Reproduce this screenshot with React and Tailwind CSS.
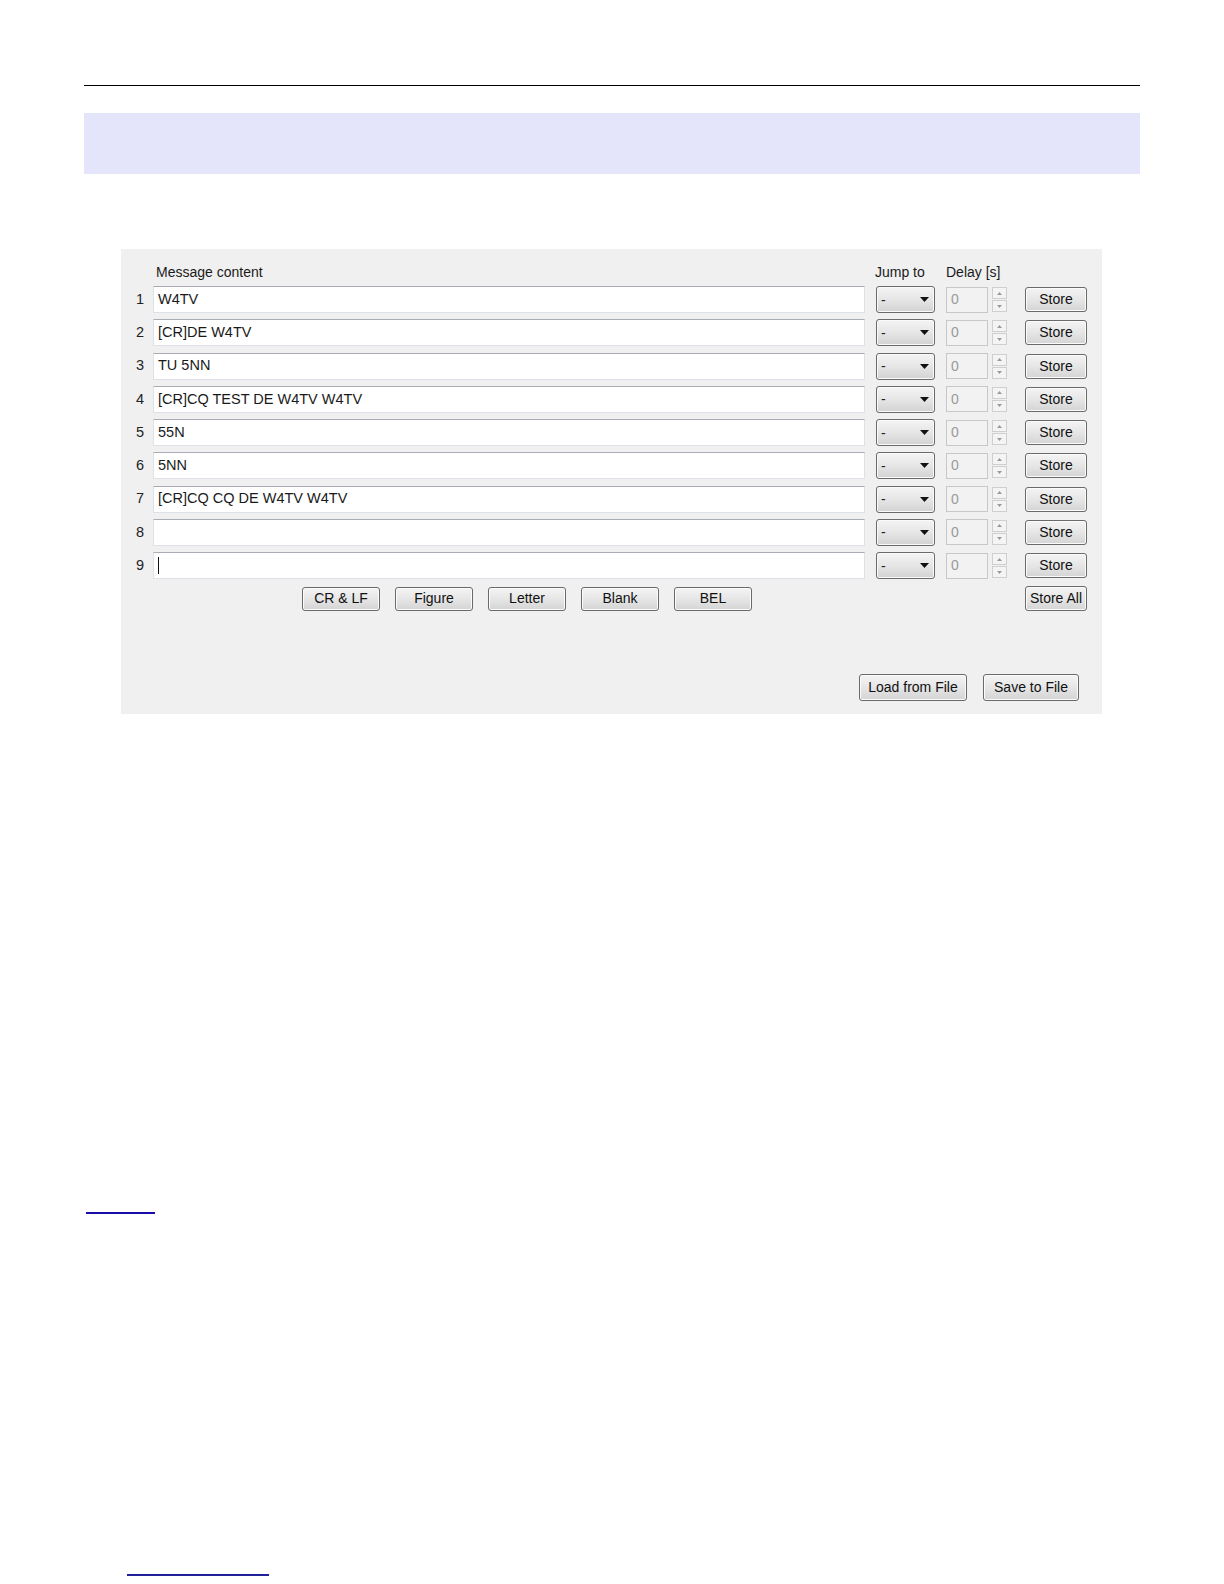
import React from "react";

const rows = [
  "W4TV",
  "[CR]DE W4TV",
  "TU 5NN",
  "[CR]CQ TEST DE W4TV W4TV",
  "55N",
  "5NN",
  "[CR]CQ CQ DE W4TV W4TV",
  "",
  "",
];

function WinButton({ children, className = "" }) {
  return (
    <div
      className={
        "flex items-center justify-center rounded-[3px] border border-[#6a6a6a] bg-gradient-to-b from-[#f4f4f4] via-[#e6e6e6] to-[#d4d4d4] text-[14px] text-[#111] shadow-[inset_0_0_0_1px_#fbfbfb] " +
        className
      }
    >
      {children}
    </div>
  );
}

function Dropdown() {
  return (
    <div className="flex h-[27px] w-[59px] items-center justify-between rounded-[3px] border border-[#6a6a6a] bg-gradient-to-b from-[#f4f4f4] via-[#e6e6e6] to-[#d2d2d2] pl-[4px] pr-[5px] shadow-[inset_0_0_0_1px_#fafafa]">
      <span className="text-[14px] leading-none text-[#222]">-</span>
      <svg width="9" height="5" viewBox="0 0 9 5">
        <path d="M0 0 L9 0 L4.5 5 Z" fill="#111" />
      </svg>
    </div>
  );
}

function Spinner() {
  return (
    <div className="flex w-[15px] flex-col gap-[1px]">
      <div className="flex h-[12px] items-center justify-center border border-[#cfcfcf] bg-[#f4f4f4]">
        <svg width="5" height="3" viewBox="0 0 5 3">
          <path d="M0 3 L5 3 L2.5 0 Z" fill="#9a9a9a" />
        </svg>
      </div>
      <div className="flex h-[12px] items-center justify-center border border-[#cfcfcf] bg-[#f4f4f4]">
        <svg width="5" height="3" viewBox="0 0 5 3">
          <path d="M0 0 L5 0 L2.5 3 Z" fill="#9a9a9a" />
        </svg>
      </div>
    </div>
  );
}

export default function App() {
  return (
    <div
      className="min-h-[1584px] w-full bg-white px-[84px] pt-[85px]"
      style={{ fontFamily: '"Liberation Sans", Arial, sans-serif' }}
    >
      <div className="h-[1px] w-full bg-black" />
      <div className="mt-[27px] h-[61px] w-full bg-[#e4e4fb]" />

      <div className="ml-[37px] mt-[75px] w-[981px] bg-[#f0f0f0] pb-[13px] text-[#1a1a1a]">
        {/* header labels */}
        <div className="relative h-[34px] text-[14px] leading-[18px]">
          <span className="absolute left-[35px] top-[14px]">Message content</span>
          <span className="absolute left-[754px] top-[14px]">Jump to</span>
          <span className="absolute left-[825px] top-[14px]">Delay [s]</span>
        </div>

        {/* rows */}
        <div className="flex flex-col">
          {rows.map((text, i) => (
            <div key={i} className="flex h-[33.25px] items-center">
              <span className="w-[32px] pr-[9px] text-right text-[14.5px] text-[#222]">
                {i + 1}
              </span>
              <div className="flex h-[27px] w-[712px] items-center border border-[#dde2e8] border-t-[#a9acb2] bg-white px-[4px] text-[14.5px] text-[#1a1a1a]">
                {text}
                {i === 8 && <span className="h-[17px] w-[1px] bg-[#111]" />}
              </div>
              <div className="ml-[11px]">
                <Dropdown />
              </div>
              <div className="ml-[11px] flex h-[26px] w-[42px] items-center border border-[#c8c8c8] bg-[#f2f2f2] px-[4px] text-[14px] text-[#9a9a9a]">
                0
              </div>
              <div className="ml-[4px]">
                <Spinner />
              </div>
              <WinButton className="ml-[18px] h-[25px] w-[62px]">Store</WinButton>
            </div>
          ))}
        </div>

        {/* insert buttons */}
        <div className="mt-[4px] flex h-[25px] items-center pr-[15px]">
          <div className="ml-[181px] flex gap-[15px]">
            {["CR & LF", "Figure", "Letter", "Blank", "BEL"].map((b) => (
              <WinButton key={b} className="h-[24px] w-[78px]">
                {b}
              </WinButton>
            ))}
          </div>
          <WinButton className="ml-auto h-[25px] w-[62px]">Store All</WinButton>
        </div>

        {/* file buttons */}
        <div className="mt-[63px] flex justify-end gap-[16px] pr-[23px]">
          <WinButton className="h-[27px] w-[108px]">Load from File</WinButton>
          <WinButton className="h-[27px] w-[96px]">Save to File</WinButton>
        </div>
      </div>

      <div className="ml-[2px] mt-[498px] h-[2px] w-[69px] bg-[#1a0dab]" />
      <div className="ml-[43px] mt-[360px] h-[2px] w-[142px] bg-[#20209a]" />
    </div>
  );
}
